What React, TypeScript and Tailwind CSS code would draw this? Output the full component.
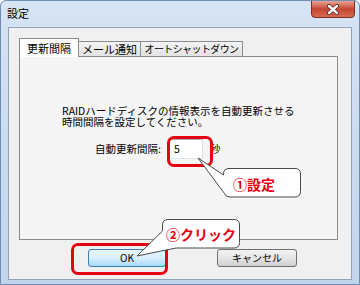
import React from 'react';

const font = { fontFamily: '"Noto Sans CJK JP", "Noto Sans", sans-serif' };

const Tab: React.FC<{ label: string; active?: boolean; width: string; small?: boolean }> = ({ label, active, width, small }) =>
  active ? (
    <div className={`relative z-10 -mb-px h-[19px] ${width} border border-b-0 border-[#898c95] bg-white flex items-center justify-center text-[11px] leading-none text-black whitespace-nowrap`}>
      {label}
    </div>
  ) : (
    <div
      className={`-ml-px h-[15px] ${width} border border-b-0 border-[#898c95] bg-gradient-to-b from-[#f3f3f3] to-[#e3e3e3] flex items-center justify-center leading-none text-black whitespace-nowrap ${
        small ? 'text-[10px] tracking-[-0.6px]' : 'text-[11px]'
      }`}
    >
      {label}
    </div>
  );

const App: React.FC = () => {
  return (
    <div className="w-[360px] h-[285px] bg-white" style={font}>
      <div className="relative w-[360px] h-[285px] rounded-t-[6px] border border-[#6f8db3] bg-gradient-to-b from-[#d6e4f4] to-[#c0d4eb] flex flex-col px-[7px] pb-[4px] overflow-hidden">
        {/* title bar */}
        <div className="h-[26px] flex items-start justify-between">
          <span className="pt-[5px] -ml-px text-[11px] leading-[14px] text-black">設定</span>
          <div className="-mt-px -mr-[3px] w-[44px] h-[18px] rounded-b-[4px] border border-[#7a2d24] bg-gradient-to-b from-[#e6a596] via-[#c4452f] to-[#d66a52] flex items-center justify-center">
            <svg width="14" height="11" viewBox="0 0 14 11">
              <path d="M3 2 L11 9 M11 2 L3 9" stroke="#5a2018" strokeWidth="4" strokeLinecap="round" />
              <path d="M3 2 L11 9 M11 2 L3 9" stroke="#ffffff" strokeWidth="2.4" strokeLinecap="round" />
            </svg>
          </div>
        </div>

        {/* client area */}
        <div className="flex-1 border border-[#8fa3bd] bg-[#f0f0f0] flex flex-col pl-[10px] pr-[13px] pt-[10px]">
          <div className="h-[18px] flex items-end">
            <Tab label="更新間隔" active width="w-[60px]" />
            <Tab label="メール通知" width="w-[63px]" />
            <Tab label="オートシャットダウン" width="w-[103px]" small />
          </div>
          <div className="h-[184px] border border-[#898c95] bg-[#f5f5f5] flex flex-col pl-[42px] pt-[48px]">
            <div className="text-[10.5px] leading-[11px] text-black">RAIDハードディスクの情報表示を自動更新させる</div>
            <div className="text-[10.5px] leading-[11px] text-black">時間間隔を設定してください。</div>
            <div className="mt-[12px] pl-[33px] flex items-center text-[10.5px] text-black">
              <span>自動更新間隔:</span>
              <div className="ml-[8px] w-[34px] h-[20px] border border-[#abadb3] border-b-[#e3e9ef] border-r-[#dbdfe6] bg-white flex items-center pl-[4px] leading-none">
                5
              </div>
              <span className="ml-[7px]">秒</span>
            </div>
          </div>
          <div className="mt-[9px] flex items-start pl-[69px] gap-[51px]">
            <button className="w-[78px] h-[18px] rounded-[3px] border border-[#3c7fb1] bg-gradient-to-b from-[#eaf6fd] via-[#d9f0fc] to-[#a7d9f5] text-[10px] leading-none text-black">
              OK
            </button>
            <button className="w-[80px] h-[18px] rounded-[3px] border border-[#707070] bg-gradient-to-b from-[#f2f2f2] via-[#e6e6e6] to-[#cfcfcf] text-[10px] leading-none text-black">
              キャンセル
            </button>
          </div>
        </div>

        {/* annotation: red highlight frames */}
        <div className="absolute left-[166px] top-[135px] w-[46px] h-[31px] rounded-[7px] border-[3px] border-[#e60012]" />
        <div className="absolute left-[70px] top-[242px] w-[97px] h-[32px] rounded-[7px] border-[3px] border-[#e60012]" />

        {/* annotation: speech bubbles */}
        <svg className="absolute -left-px -top-px pointer-events-none" width="360" height="285" viewBox="0 0 360 285">
          <path
            d="M229 168.5 H295 Q300.5 168.5 300.5 174 V191.5 Q300.5 197 295 197 H230 Q225.5 197 224.5 193.5 L198 158 L223.5 175 V174 Q223.5 168.5 229 168.5 Z"
            fill="#ffffff"
            stroke="#4a4a4a"
            strokeWidth="1"
          />
          <path
            d="M168 219.5 H234 Q239.5 219.5 239.5 225 V242.5 Q239.5 248 234 248 H176 L137 256 L162.5 231 V225 Q162.5 219.5 168 219.5 Z"
            fill="#ffffff"
            stroke="#4a4a4a"
            strokeWidth="1"
          />
        </svg>
        <div className="absolute left-[232px] top-[174px] text-[14px] leading-[18px] font-bold text-[#e60012]">①設定</div>
        <div className="absolute left-[165px] top-[224px] text-[14px] leading-[18px] font-bold text-[#e60012]">②クリック</div>
      </div>
    </div>
  );
};

export default App;
